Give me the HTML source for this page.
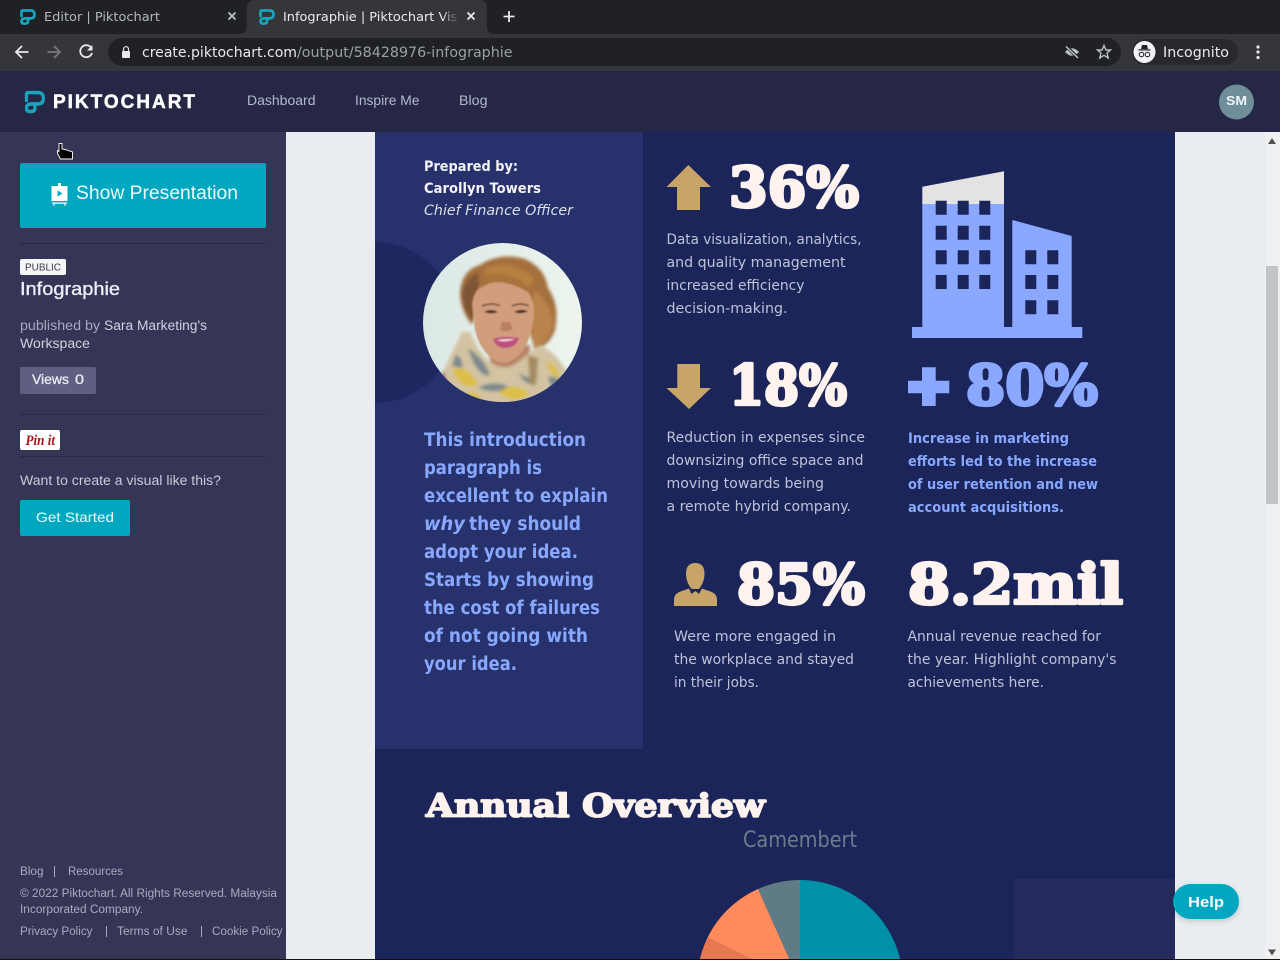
<!DOCTYPE html>
<html lang="en"><head><meta charset="utf-8"><title>Infographie | Piktochart</title>
<style>
html,body{margin:0;padding:0;width:1280px;height:960px;overflow:hidden;background:#e9edf1}
svg{display:block;position:absolute;left:0;top:0}
text{font-family:"Liberation Sans",sans-serif;white-space:pre}
.b{font-family:"DejaVu Sans",sans-serif;font-weight:400;font-size:14px;fill:#bfc2d8}
.bl{font-family:"DejaVu Sans",sans-serif;font-weight:700;font-size:14px;fill:#88a8ff}
.i{font-family:"DejaVu Sans",sans-serif;font-weight:700;font-size:18.5px;fill:#88a8ff}
.n{font-family:"DejaVu Serif",serif;font-weight:700;font-size:55px;fill:#fff3f0;stroke:#fff3f0;stroke-width:3.2;stroke-linejoin:round}
.s{font-size:13.5px;fill:#c9cadb}
.f{font-size:11.5px;fill:#a9abc0}
.nav{font-size:13.5px;fill:#b4b8cf}
.c{font-family:"DejaVu Sans",sans-serif}
</style></head><body>
<svg width="1280" height="960" viewBox="0 0 1280 960" xmlns="http://www.w3.org/2000/svg">
<defs>
<g id="p" fill="none" stroke="#19a3bd" stroke-linecap="round" stroke-linejoin="round"><path d="M1.500 7V2.800Q1.500 1.500 2.800 1.500H10.500Q14.500 1.500 14.500 5.400Q14.500 9.400 10.500 9.400H5.500Q1.500 9.400 1.500 12.400Q1.500 14.700 4.500 14.700Q8 14.700 8 12.400V9.400"/></g>
<clipPath id="ph"><circle cx="502.5" cy="322.5" r="79.5"/></clipPath>
<clipPath id="pie"><circle cx="800" cy="983" r="103"/></clipPath>
<filter id="bl" x="-20%" y="-20%" width="140%" height="140%"><feGaussianBlur stdDeviation="1.6"/></filter>
<filter id="bl2" x="-20%" y="-20%" width="140%" height="140%"><feGaussianBlur stdDeviation=".9"/></filter>
<filter id="sh" x="-20%" y="-20%" width="140%" height="150%"><feDropShadow dx="0" dy="2" stdDeviation="3" flood-color="#000" flood-opacity=".18"/></filter>
<linearGradient id="fade"><stop offset="0" stop-color="#35363a" stop-opacity="0"/><stop offset="1" stop-color="#35363a"/></linearGradient>
<linearGradient id="bg" x1="0" x2="1"><stop offset="0" stop-color="#dbe8e6"/><stop offset="1" stop-color="#eef5ee"/></linearGradient>
</defs>

<!-- page bg -->
<rect width="1280" height="960" fill="#e9edf1"/>

<!-- browser chrome -->
<rect width="1280" height="34" fill="#202124"/>
<path d="M239 34Q247 34 247 26V8Q247 0 255 0H479Q487 0 487 8V26Q487 34 495 34Z" fill="#35363a"/>
<rect y="34" width="1280" height="37" fill="#35363a"/>
<use href="#p" transform="translate(20 9)" stroke-width="2.700"/>
<text class="c" x="44" y="21" font-size="12.500" fill="#b5b8bc" textLength="116" lengthAdjust="spacingAndGlyphs">Editor | Piktochart</text>
<path d="M228.500 12.500L235.500 19.500M235.500 12.500L228.500 19.500" stroke="#bdc1c6" stroke-width="1.800"/>
<use href="#p" transform="translate(259 9)" stroke-width="2.700"/>
<text class="c" x="283" y="21" font-size="12.500" fill="#e8eaed" textLength="194" lengthAdjust="spacingAndGlyphs">Infographie | Piktochart Visual</text>
<rect x="441" y="6" width="18" height="22" fill="url(#fade)"/><rect x="459" y="6" width="22" height="22" fill="#35363a"/>
<path d="M467.500 12.500L474.500 19.500M474.500 12.500L467.500 19.500" stroke="#e8eaed" stroke-width="1.800"/>
<path d="M509 11V22M503.500 16.500H514.500" stroke="#e8eaed" stroke-width="1.800"/>
<path d="M28.500 52H16.500M22 46L16 52L22 58" fill="none" stroke="#e8eaed" stroke-width="1.800"/>
<path d="M47.500 52H59.500M54 46L60 52L54 58" fill="none" stroke="#787a7d" stroke-width="1.800"/>
<path d="M91 47.500A6 6 0 1 0 92 53" fill="none" stroke="#e8eaed" stroke-width="1.800"/><path d="M92.500 45V50.500H87Z" fill="#e8eaed"/>
<rect x="108" y="38" width="1013" height="28" rx="14" fill="#202124"/>
<rect x="122" y="51" width="8" height="7" rx="1" fill="#e8eaed"/><path d="M123.500 51V49.200A2.500 2.500 0 0 1 128.500 49.200V51" fill="none" stroke="#e8eaed" stroke-width="1.200"/>
<text class="c" x="142" y="57" font-size="14.500" fill="#e8eaed" textLength="155" lengthAdjust="spacingAndGlyphs">create.piktochart.com</text>
<text class="c" x="297" y="57" font-size="14.500" fill="#9aa0a6" textLength="215.500" lengthAdjust="spacingAndGlyphs">/output/58428976-infographie</text>
<path d="M1065 52Q1072 44.500 1079 52Q1072 59.500 1065 52Z" fill="#bdc1c6"/><path d="M1066 46L1078 58" stroke="#202124" stroke-width="3.200"/><path d="M1066 46.500L1078 58" stroke="#bdc1c6" stroke-width="1.500"/>
<path d="M1104 45.500L1106 50H1110.500L1107 53L1108.200 58L1104 55.300L1099.800 58L1101 53L1097.500 50H1102Z" fill="none" stroke="#bdc1c6" stroke-width="1.400"/>
<rect x="1132" y="39" width="106" height="26" rx="13" fill="#28292c"/>
<circle cx="1144.500" cy="52" r="11" fill="#f1f3f4"/>
<path d="M1141 49L1142 45H1147L1148 49ZM1138.500 49.300H1150.500V50.500H1138.500Z" fill="#202124"/><circle cx="1141.500" cy="54.500" r="2.300" fill="none" stroke="#202124" stroke-width="1"/><circle cx="1147.500" cy="54.500" r="2.300" fill="none" stroke="#202124" stroke-width="1"/>
<text class="c" x="1163" y="57" font-size="14" fill="#e8eaed" textLength="66" lengthAdjust="spacingAndGlyphs">Incognito</text>
<circle cx="1258" cy="47" r="1.600" fill="#e8eaed"/><circle cx="1258" cy="52" r="1.600" fill="#e8eaed"/><circle cx="1258" cy="57.500" r="1.600" fill="#e8eaed"/>

<!-- site header -->
<rect y="71" width="1280" height="61" fill="#252745"/>
<g transform="translate(24.500 90.500) scale(1.300 1.430)"><use href="#p" stroke-width="2.500"/></g>
<text x="53" y="108" font-size="19" font-weight="700" fill="#fff" stroke="#fff" stroke-width=".5" textLength="142" lengthAdjust="spacing">PIKTOCHART</text>
<text class="nav" x="247" y="105" textLength="68.500" lengthAdjust="spacingAndGlyphs">Dashboard</text>
<text class="nav" x="355" y="105" textLength="64.500" lengthAdjust="spacingAndGlyphs">Inspire Me</text>
<text class="nav" x="459" y="105" textLength="28.500" lengthAdjust="spacingAndGlyphs">Blog</text>
<circle cx="1236.500" cy="102" r="17.500" fill="#6f8e9a"/>
<text x="1226" y="105" font-size="12.500" font-weight="700" fill="#f1f4f6" textLength="21" lengthAdjust="spacingAndGlyphs">SM</text>

<!-- sidebar -->
<rect y="132" width="286" height="828" fill="#353555"/>
<rect x="20" y="163" width="246" height="65" rx="2" fill="#00a7bf"/>
<path d="M58 183H61V186H67.500V201H51.500V186H58ZM52 202.500H67V203.800H65.500V206H64.500V203.800H54.500V206H53.500V203.800H52Z" fill="#fff"/><path d="M57.500 190.500L62.500 193.500L57.500 196.500Z" fill="#00a7bf"/>
<text x="76" y="199" font-size="19" fill="#e9fbfd" textLength="162" lengthAdjust="spacingAndGlyphs">Show Presentation</text>
<rect x="20" y="243" width="246" height="1" fill="#2a2a45"/>
<rect x="20" y="259" width="46" height="16" rx="2" fill="#f4f6f8"/>
<text x="25" y="270.500" font-size="10.500" fill="#3a3a48" textLength="36" lengthAdjust="spacingAndGlyphs">PUBLIC</text>
<text x="20" y="295" font-size="18.500" fill="#eeeff6" stroke="#eeeff6" stroke-width=".35" textLength="100" lengthAdjust="spacingAndGlyphs">Infographie</text>
<text x="20" y="330" font-size="13.500" fill="#a6a8bf" textLength="80" lengthAdjust="spacingAndGlyphs">published by</text>
<text x="104" y="330" font-size="13.500" fill="#d0d1df" textLength="103" lengthAdjust="spacingAndGlyphs">Sara Marketing's</text>
<text x="20" y="348" font-size="13.500" fill="#d0d1df" textLength="70" lengthAdjust="spacingAndGlyphs">Workspace</text>
<rect x="20" y="367" width="76" height="27" rx="2" fill="#5f5f82"/>
<text x="32" y="384" font-size="13.500" fill="#eceaf3" stroke="#eceaf3" stroke-width=".3" textLength="37" lengthAdjust="spacingAndGlyphs">Views</text>
<text x="75" y="384" font-size="13.500" fill="#eceaf3" stroke="#eceaf3" stroke-width=".3" textLength="9" lengthAdjust="spacingAndGlyphs">0</text>
<rect x="20" y="414" width="246" height="1" fill="#2a2a45"/>
<rect x="20" y="430" width="40" height="20" rx="2" fill="#fff"/>
<text x="25.500" y="445" font-size="14.500" font-style="italic" font-weight="700" fill="#a8161d" style="font-family:'Liberation Serif',serif" textLength="29.500" lengthAdjust="spacingAndGlyphs">Pin it</text>
<rect x="20" y="456" width="246" height="1" fill="#2a2a45"/>
<text class="s" x="20" y="485" textLength="201" lengthAdjust="spacingAndGlyphs">Want to create a visual like this?</text>
<rect x="20" y="500" width="110" height="36" rx="2" fill="#00a7bf"/>
<text x="36" y="522" font-size="14" fill="#e9fbfd" textLength="78" lengthAdjust="spacingAndGlyphs">Get Started</text>
<text class="f" x="20" y="875" textLength="23.500" lengthAdjust="spacingAndGlyphs">Blog</text>
<rect x="54" y="866" width="1" height="11" fill="#a9abc0"/>
<text class="f" x="68" y="875" textLength="55" lengthAdjust="spacingAndGlyphs">Resources</text>
<text class="f" x="20" y="897" textLength="257" lengthAdjust="spacingAndGlyphs">© 2022 Piktochart. All Rights Reserved. Malaysia</text>
<text class="f" x="20" y="913" textLength="123" lengthAdjust="spacingAndGlyphs">Incorporated Company.</text>
<text class="f" x="20" y="935" textLength="72.500" lengthAdjust="spacingAndGlyphs">Privacy Policy</text>
<rect x="106" y="926" width="1" height="11" fill="#a9abc0"/>
<text class="f" x="117" y="935" textLength="70.500" lengthAdjust="spacingAndGlyphs">Terms of Use</text>
<rect x="201" y="926" width="1" height="11" fill="#a9abc0"/>
<text class="f" x="212" y="935" textLength="70.500" lengthAdjust="spacingAndGlyphs">Cookie Policy</text>
<!-- cursor -->
<path d="M59 143.500H62V149L65 149.500L68 150.500L72.500 152V159H60.500L57.500 153.500V150.500L59 151.500Z" fill="#000" stroke="#fff" stroke-width=".9"/>

<!-- infographic -->
<rect x="375" y="132" width="800" height="828" fill="#1b2559"/>
<rect x="375" y="132" width="268" height="617" fill="#27316b"/>
<path d="M375 242A80.500 80.500 0 0 1 455.500 322.500A80.500 80.500 0 0 1 375 403Z" fill="#1e2760"/>
<text x="424" y="171" class="bl" style="fill:#f3f3f8" textLength="94" lengthAdjust="spacingAndGlyphs">Prepared by:</text>
<text x="424" y="193" class="bl" style="fill:#f3f3f8" textLength="117" lengthAdjust="spacingAndGlyphs">Carollyn Towers</text>
<text x="424" y="215" class="b" style="font-style:italic;fill:#dcdeea" textLength="149" lengthAdjust="spacingAndGlyphs">Chief Finance Officer</text>

<!-- photo -->
<g clip-path="url(#ph)">
<rect x="420" y="240" width="170" height="170" fill="url(#bg)"/>
<g filter="url(#bl)">
<path d="M460 292Q462 270 480 265Q500 252 525 259Q545 268 548 288Q560 305 555 330Q550 345 535 350L520 300L480 295L472 325Q460 310 460 292Z" fill="#a46f3e"/>
<path d="M535 290Q552 305 553 325Q548 342 535 348Q528 320 535 290Z" fill="#b9844b"/>
<path d="M462 292Q466 278 478 272L480 296L473 322Q462 310 462 292Z" fill="#7f5636"/>
<path d="M485 268Q510 258 535 278L530 288Q505 270 485 276Z" fill="#b5803f"/>
<rect x="490" y="345" width="40" height="30" fill="#b88266"/>
</g>
<g filter="url(#bl2)">
<path d="M472 305Q474 282 500 278Q526 277 534 305Q535 333 522 352Q510 366 497 362Q480 352 475 330Z" fill="#d29d7b"/>
<path d="M476 293Q495 270 534 296L520 280L490 275Z" fill="#a9733e"/>
<path d="M482 306Q492 302 500 306" fill="none" stroke="#6e4733" stroke-width="1.500"/><path d="M512 306Q520 302 529 306" fill="none" stroke="#6e4733" stroke-width="1.500"/>
<path d="M484 312Q491 308 498 312Q491 315 484 312ZM514 312Q521 308 528 311Q521 315 514 312Z" fill="#4f3630"/>
<path d="M500 330Q507 333 513 329L510 322H502Z" fill="#b98062"/>
<path d="M493 339Q505 335 519 338Q516 348 505 348Q496 348 493 339Z" fill="#bf4f7f"/>
<path d="M497 340Q505 339 515 339Q505 343 497 340Z" fill="#f5e6e6"/>
</g>
<g filter="url(#bl)">
<path d="M440 410V378L462 332L470 332Q478 352 490 362Q505 372 518 362L533 350L540 345Q560 355 570 378V410Z" fill="#d3c3a2"/>
<path d="M452 370Q468 363 478 385Q462 392 452 370ZM498 392Q515 380 530 394Q515 406 498 392ZM546 360Q556 364 560 378Q550 378 546 360ZM466 394Q476 388 482 400H466Z" fill="#dcbf48"/>
<path d="M468 348Q486 360 490 376Q476 376 468 348ZM478 388Q492 380 508 386Q500 396 478 388ZM518 372Q530 382 538 374Q530 394 518 372ZM548 376L564 380L552 392ZM456 354Q464 360 462 368L452 366Z" fill="#7e8a8c"/>
<path d="M528 355L538 358L536 385L530 385Z" fill="#a58a60"/>
<path d="M443 370L450 392L462 404H438Z" fill="#8c3a62"/>
</g>
</g>

<!-- intro paragraph -->
<text class="i" x="424" y="446" textLength="162" lengthAdjust="spacingAndGlyphs">This introduction</text>
<text class="i" x="424" y="474" textLength="118" lengthAdjust="spacingAndGlyphs">paragraph is</text>
<text class="i" x="424" y="502" textLength="184" lengthAdjust="spacingAndGlyphs">excellent to explain</text>
<text class="i" x="424" y="530" font-style="italic" textLength="41" lengthAdjust="spacingAndGlyphs">why</text>
<text class="i" x="469" y="530" textLength="112" lengthAdjust="spacingAndGlyphs">they should</text>
<text class="i" x="424" y="558" textLength="154" lengthAdjust="spacingAndGlyphs">adopt your idea.</text>
<text class="i" x="424" y="586" textLength="170" lengthAdjust="spacingAndGlyphs">Starts by showing</text>
<text class="i" x="424" y="614" textLength="176" lengthAdjust="spacingAndGlyphs">the cost of failures</text>
<text class="i" x="424" y="642" textLength="164" lengthAdjust="spacingAndGlyphs">of not going with</text>
<text class="i" x="424" y="670" textLength="93" lengthAdjust="spacingAndGlyphs">your idea.</text>

<!-- stats -->
<path d="M688.300 165L711 187H700V210H677V187H666.500Z" fill="#c7a468"/>
<text class="n" x="729" y="206.500" textLength="130" lengthAdjust="spacingAndGlyphs">36%</text>
<text class="b" x="666.500" y="244" textLength="195" lengthAdjust="spacingAndGlyphs">Data visualization, analytics,</text>
<text class="b" x="666.500" y="267" textLength="179" lengthAdjust="spacingAndGlyphs">and quality management</text>
<text class="b" x="666.500" y="290" textLength="138" lengthAdjust="spacingAndGlyphs">increased efficiency</text>
<text class="b" x="666.500" y="313" textLength="121" lengthAdjust="spacingAndGlyphs">decision-making.</text>

<path d="M912 327V338H1082.300V327H1071.700V236L1012.300 220V327H1004V204H922.300V327Z" fill="#8aa8ff"/>
<path d="M922.300 186.700L1004 171.300V204H922.300Z" fill="#e3e3e3"/>
<path fill="#1b2559" d="M935.700 200.700h11v14h-11zM957.700 200.700h11v14h-11zM979.300 200.700h11v14h-11zM935.700 225.700h11v14h-11zM957.700 225.700h11v14h-11zM979.300 225.700h11v14h-11zM935.700 250.300h11v14h-11zM957.700 250.300h11v14h-11zM979.300 250.300h11v14h-11zM935.700 275h11v14h-11zM957.700 275h11v14h-11zM979.300 275h11v14h-11zM1025.300 250.300h11v14h-11zM1047.300 250.300h11v14h-11zM1025.300 275h11v14h-11zM1047.300 275h11v14h-11zM1025.300 300.300h11v14h-11zM1047.300 300.300h11v14h-11z"/>

<path d="M677.300 364H700V388H711L689 409L666.500 388H677.300Z" fill="#c7a468"/>
<text class="n" x="729" y="404.500" textLength="118" lengthAdjust="spacingAndGlyphs">18%</text>
<text class="b" x="666.500" y="442" textLength="198.500" lengthAdjust="spacingAndGlyphs">Reduction in expenses since</text>
<text class="b" x="666.500" y="465" textLength="197" lengthAdjust="spacingAndGlyphs">downsizing office space and</text>
<text class="b" x="666.500" y="488" textLength="157.500" lengthAdjust="spacingAndGlyphs">moving towards being</text>
<text class="b" x="666.500" y="511" textLength="184.500" lengthAdjust="spacingAndGlyphs">a remote hybrid company.</text>

<path d="M922 367.300H935.700V380.700H949.300V393.300H935.700V406H922V393.300H908V380.700H922Z" fill="#8aa8ff"/>
<text class="n" x="966" y="404.500" style="fill:#8aa8ff;stroke:#8aa8ff" textLength="132" lengthAdjust="spacingAndGlyphs">80%</text>
<text class="bl" x="908" y="443" textLength="161" lengthAdjust="spacingAndGlyphs">Increase in marketing</text>
<text class="bl" x="908" y="466" textLength="189" lengthAdjust="spacingAndGlyphs">efforts led to the increase</text>
<text class="bl" x="908" y="489" textLength="190" lengthAdjust="spacingAndGlyphs">of user retention and new</text>
<text class="bl" x="908" y="512" textLength="156" lengthAdjust="spacingAndGlyphs">account acquisitions.</text>

<path d="M695.300 563Q704.500 563 704.500 574Q704.500 582 699 589H691.500Q686 582 686 574Q686 563 695.300 563Z" fill="#c7a468"/>
<path d="M674 606V600Q674 593 682 591L689 588.500L691.500 594L695.500 591L699 594L702 588.500L709 591Q717 593 717 600V606Z" fill="#c7a468"/>
<text class="n" x="737" y="603.500" textLength="128" lengthAdjust="spacingAndGlyphs">85%</text>
<text class="b" x="674" y="641" textLength="162" lengthAdjust="spacingAndGlyphs">Were more engaged in</text>
<text class="b" x="674" y="664" textLength="180" lengthAdjust="spacingAndGlyphs">the workplace and stayed</text>
<text class="b" x="674" y="687" textLength="85" lengthAdjust="spacingAndGlyphs">in their jobs.</text>

<text class="n" x="908" y="603.500" textLength="215" lengthAdjust="spacingAndGlyphs">8.2mil</text>
<text class="b" x="907.500" y="641" textLength="193.500" lengthAdjust="spacingAndGlyphs">Annual revenue reached for</text>
<text class="b" x="907.500" y="664" textLength="209" lengthAdjust="spacingAndGlyphs">the year. Highlight company's</text>
<text class="b" x="907.500" y="687" textLength="136.500" lengthAdjust="spacingAndGlyphs">achievements here.</text>

<!-- annual overview -->
<text class="n" x="426" y="816.500" style="font-size:32px;stroke-width:1.800" textLength="339" lengthAdjust="spacingAndGlyphs">Annual Overview</text>
<text x="743" y="847" font-size="22" fill="#6c7c8c" style="font-family:'DejaVu Sans',sans-serif" textLength="114" lengthAdjust="spacingAndGlyphs">Camembert</text>
<g clip-path="url(#pie)">
<path d="M800 983V870H920V983Z" fill="#0091a8"/>
<path d="M800 983V870H756L758 889Z" fill="#5f7b85"/>
<path d="M800 983L758 889L740 870L680 880V940L708 938Z" fill="#ff8a5c"/>
<path d="M800 983L708 938L680 940V983Z" fill="#e8784f"/>
</g>
<rect x="1014" y="879" width="161" height="81" fill="#252b5c"/>

<!-- help -->
<rect x="1173" y="884" width="66" height="35" rx="17.500" fill="#00a7bf" filter="url(#sh)"/>
<text x="1188" y="907" font-size="15" font-weight="700" fill="#fff" textLength="36" lengthAdjust="spacingAndGlyphs">Help</text>

<!-- scrollbar -->
<rect x="1265" y="132" width="15" height="828" fill="#eef0f2"/>
<rect x="1266" y="266" width="12" height="238" fill="#c1c3c5"/>
<path d="M1272 138L1276 144H1268Z" fill="#505050"/>
<path d="M1272 955.500L1276 949.500H1268Z" fill="#505050"/>
<rect y="959" width="1280" height="1" fill="#111"/>
</svg>
</body></html>
